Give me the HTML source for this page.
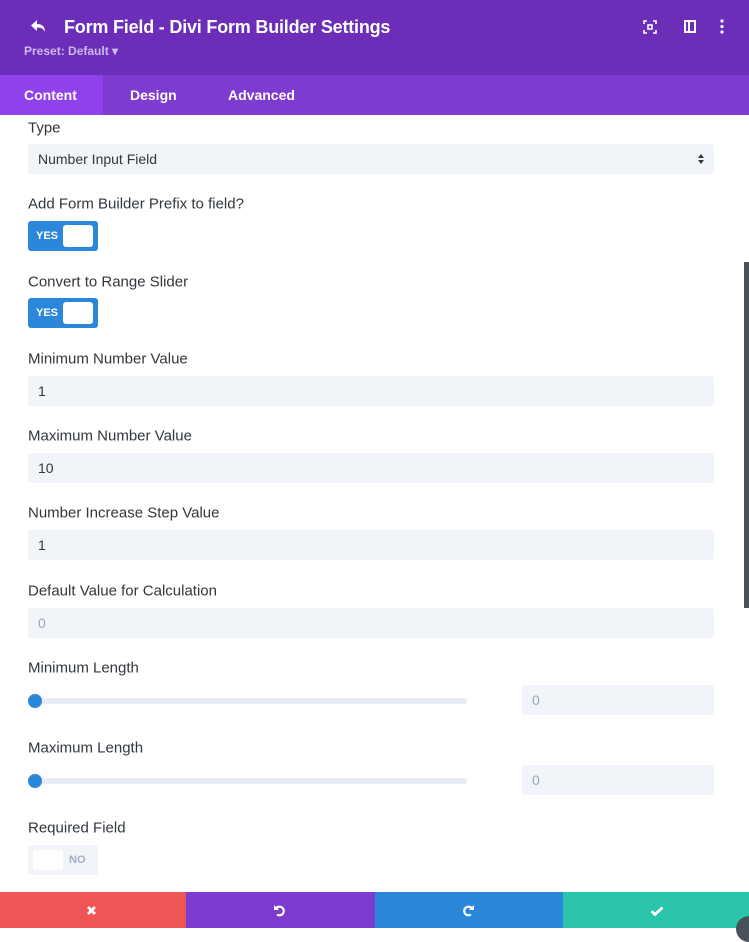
<!DOCTYPE html>
<html><head><meta charset="utf-8"><style>
*{margin:0;padding:0;box-sizing:border-box}
body{width:749px;height:928px;overflow:hidden;background:#fff;font-family:"Liberation Sans",sans-serif;position:relative}
.a{position:absolute}
.hdr{left:0;top:0;width:749px;height:75px;background:#6c2eb9}
.tabs{left:0;top:75px;width:749px;height:40px;background:#7e3bd0}
.tab{top:75px;height:40px;line-height:40px;color:#fff;font-size:14px;font-weight:bold}
.lbl{left:28px;font-size:15px;color:#32373c;transform:translateY(-50%)}
.inp{left:28px;width:686px;height:30px;background:#f1f4f8;border-radius:3px;font-size:14px;color:#32373c;line-height:30px;padding-left:10px}
.ph{color:#98a7bd}
.tog{left:28px;width:70px;height:30px;background:#2b87da;border-radius:3px}
.tog span{position:absolute;left:8px;top:0;line-height:30px;color:#fff;font-size:11px;font-weight:bold}
.tog i{position:absolute;left:35px;top:4px;width:30px;height:22px;background:#fff;border-radius:3px}
.track{left:28px;width:439px;height:6px;background:#e6ecf3;border-radius:3px}
.knob{left:28px;width:14px;height:14px;border-radius:50%;background:#2b87da}
.small{left:522px;width:192px}
.btn{top:892px;height:36px}
</style></head><body>
<div class="a hdr"></div>
<svg class="a" style="left:30px;top:18px" width="18" height="16" viewBox="0 0 18 16"><path d="M7 2 L1 7.5 L7 13 V9.5 C11 9.5 13.5 10.5 15 14 C15 8.5 12 6 7 6 Z" fill="#fff"/></svg>
<div class="a" style="left:64px;top:17px;color:#fff;font-size:18px;font-weight:bold;letter-spacing:-0.2px">Form Field - Divi Form Builder Settings</div>
<div class="a" style="left:24px;top:44px;color:#cdb8ea;font-size:12px;font-weight:bold">Preset: Default ▾</div>
<svg class="a" style="left:643px;top:20px" width="14" height="14" viewBox="0 0 14 14"><path d="M1 4V1h3M10 1h3v3M13 10v3h-3M4 13H1v-3" stroke="#fff" stroke-width="1.6" fill="none"/><rect x="5" y="5" width="4" height="4" fill="none" stroke="#fff" stroke-width="1.6"/></svg>
<svg class="a" style="left:684px;top:20px" width="12" height="13" viewBox="0 0 12 13"><rect x="1" y="1" width="10" height="11" fill="none" stroke="#fff" stroke-width="2"/><rect x="4" y="1" width="2" height="11" fill="#fff"/></svg>
<svg class="a" style="left:720px;top:19px" width="4" height="15"><circle cx="2" cy="2" r="1.6" fill="#fff"/><circle cx="2" cy="7.5" r="1.6" fill="#fff"/><circle cx="2" cy="13" r="1.6" fill="#fff"/></svg>
<div class="a tabs"></div>
<div class="a" style="left:0;top:75px;width:103px;height:40px;background:#8f42ec"></div>
<div class="a tab" style="left:24px">Content</div>
<div class="a tab" style="left:130px">Design</div>
<div class="a tab" style="left:228px">Advanced</div>

<div class="a lbl" style="top:128px">Type</div>
<div class="a inp" style="top:144px">Number Input Field<svg style="position:absolute;right:10px;top:10px" width="6" height="10"><path d="M0 4L3 0L6 4ZM0 6L3 10L6 6Z" fill="#32373c"/></svg></div>
<div class="a lbl" style="top:204px">Add Form Builder Prefix to field?</div>
<div class="a tog" style="top:221px"><span>YES</span><i></i></div>
<div class="a lbl" style="top:282px">Convert to Range Slider</div>
<div class="a tog" style="top:298px"><span>YES</span><i></i></div>
<div class="a lbl" style="top:359px">Minimum Number Value</div>
<div class="a inp" style="top:376px">1</div>
<div class="a lbl" style="top:436px">Maximum Number Value</div>
<div class="a inp" style="top:453px">10</div>
<div class="a lbl" style="top:513px">Number Increase Step Value</div>
<div class="a inp" style="top:530px">1</div>
<div class="a lbl" style="top:591px">Default Value for Calculation</div>
<div class="a inp ph" style="top:608px">0</div>
<div class="a lbl" style="top:668px">Minimum Length</div>
<div class="a track" style="top:698px"></div><div class="a knob" style="top:694px"></div>
<div class="a inp small ph" style="top:685px">0</div>
<div class="a lbl" style="top:748px">Maximum Length</div>
<div class="a track" style="top:778px"></div><div class="a knob" style="top:774px"></div>
<div class="a inp small ph" style="top:765px">0</div>
<div class="a lbl" style="top:828px">Required Field</div>
<div class="a" style="left:28px;top:845px;width:70px;height:30px;background:#f1f4f8;border-radius:3px"><i style="position:absolute;left:5px;top:5px;width:30px;height:20px;background:#fff;border-radius:3px"></i><span style="position:absolute;left:41px;line-height:30px;font-size:11px;font-weight:bold;color:#a2b0c1">NO</span></div>
<div class="a" style="left:744px;top:262px;width:5px;height:346px;background:#4a515a"></div>

<div class="a btn" style="left:0;width:186px;background:#ef5555"></div>
<div class="a btn" style="left:186px;width:189px;background:#7e3bd0"></div>
<div class="a btn" style="left:375px;width:188px;background:#2b87da"></div>
<div class="a btn" style="left:563px;width:186px;background:#29c4a9"></div>
<svg class="a" style="left:86px;top:905px" width="11" height="11"><path d="M2 2L9 9M9 2L2 9" stroke="#fff" stroke-width="2.8"/></svg>
<svg class="a" style="left:273px;top:904px" width="13" height="13" viewBox="0 0 13 13"><path d="M3 4.5A4.3 4.3 0 1 1 4 10.5" stroke="#fff" stroke-width="2.2" fill="none"/><path d="M1 1V6H6Z" fill="#fff"/></svg>
<svg class="a" style="left:462px;top:904px" width="13" height="13" viewBox="0 0 13 13"><path d="M10 4.5A4.3 4.3 0 1 0 9 10.5" stroke="#fff" stroke-width="2.2" fill="none"/><path d="M12 1V6H7Z" fill="#fff"/></svg>
<svg class="a" style="left:650px;top:906px" width="14" height="10"><path d="M1.5 5L5 8.5L12.5 1.5" stroke="#fff" stroke-width="2.8" fill="none"/></svg>
<div class="a" style="left:736px;top:916px;width:26px;height:26px;border-radius:50%;background:#4a515a"></div>
</body></html>
